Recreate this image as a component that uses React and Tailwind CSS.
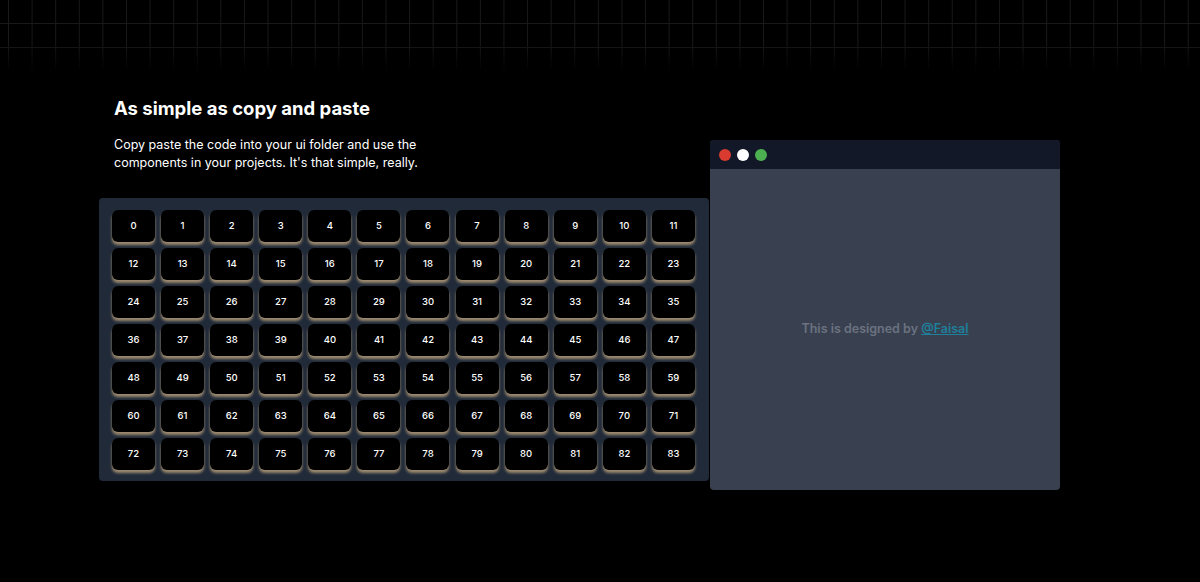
const keys = Array.from({ length: 84 }, (_, i) => i);

function Key({ n }) {
    return (
        <div className="h-[32px] w-[43px] rounded-[6px] bg-black flex items-center justify-center text-[9.5px] font-medium text-white shadow-[0_3px_3px_0_#9c8a6f,0_1px_0_0_#625a4c]">
            {n}
        </div>
    );
}

export default function App() {
    return (
        <div className="relative min-h-[582px] w-full bg-black font-['Inter',sans-serif] overflow-hidden">
            {/* grid backdrop */}
            <div className="absolute inset-x-0 top-0 h-[72px] bg-[linear-gradient(to_right,#191919_1px,transparent_1px),linear-gradient(to_bottom,#191919_1px,transparent_1px)] bg-[size:23.6px_24px] bg-[position:8px_23px] [mask-image:linear-gradient(to_bottom,black_60%,transparent)]"></div>

            <div className="relative flex items-start pl-[99px] pt-[95px]">
                {/* left column */}
                <div className="w-[611px] flex flex-col">
                    <div className="pl-[15px]">
                        <h2 className="text-[18.5px] leading-[26px] font-bold text-white">
                            As simple as copy and paste
                        </h2>
                        <p className="mt-[15px] text-[12.5px] leading-[17.5px] text-white w-[320px]">
                            Copy paste the code into your ui folder and use the components in your projects. It's that simple, really.
                        </p>
                    </div>

                    <div className="mt-[27px] w-[610px] rounded-[4px] bg-[#212a39] pl-[13px] pr-[14px] pt-[12px] pb-[11px]">
                        <div className="grid grid-cols-12 gap-x-[6px] gap-y-[6px]">
                            {keys.map((n) => (
                                <Key key={n} n={n} />
                            ))}
                        </div>
                    </div>
                </div>

                {/* browser window */}
                <div className="mt-[45px] w-[350px] h-[350px] rounded-[4px] overflow-hidden flex flex-col bg-[#394150]">
                    <div className="h-[29px] bg-[#121828] flex items-center gap-[6px] pl-[9px]">
                        <span className="h-[12px] w-[12px] rounded-full bg-[#d93b30]"></span>
                        <span className="h-[12px] w-[12px] rounded-full bg-white"></span>
                        <span className="h-[12px] w-[12px] rounded-full bg-[#4caf50]"></span>
                    </div>
                    <div className="flex-1 flex items-center justify-center">
                        <p className="text-[12.5px] font-semibold text-[#6b7280]">
                            This is designed by{" "}
                            <a href="#" className="underline text-[#1e7f9b]">@Faisal</a>
                        </p>
                    </div>
                </div>
            </div>
        </div>
    );
}
